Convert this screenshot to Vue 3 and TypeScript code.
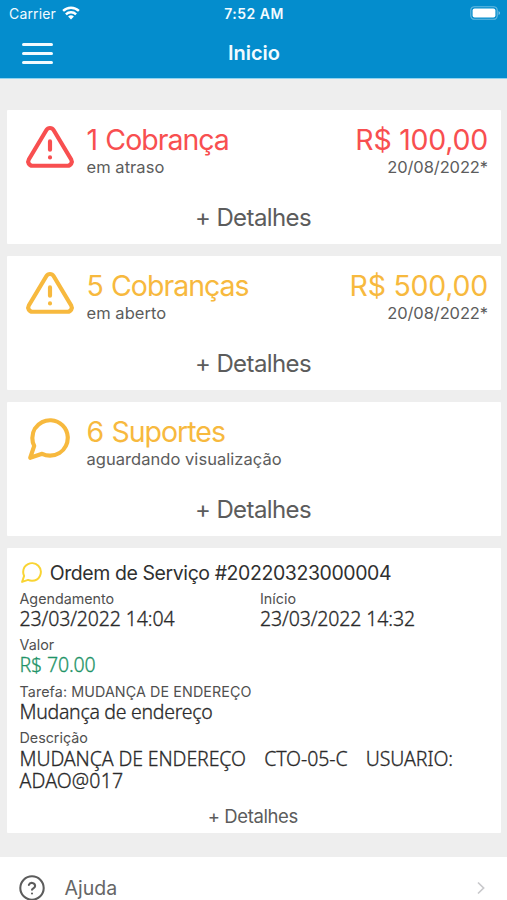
<script setup lang="ts">
interface Summary {
  id: string
  icon: 'alert' | 'chat'
  tone: 'danger' | 'warning'
  title: string
  note: string
  amount?: string
  date?: string
}

const summaries: Summary[] = [
  { id: 'overdue', icon: 'alert', tone: 'danger', title: '1 Cobrança', note: 'em atraso', amount: 'R$ 100,00', date: '20/08/2022*' },
  { id: 'open', icon: 'alert', tone: 'warning', title: '5 Cobranças', note: 'em aberto', amount: 'R$ 500,00', date: '20/08/2022*' },
  { id: 'support', icon: 'chat', tone: 'warning', title: '6 Suportes', note: 'aguardando visualização' },
]
</script>

<template>
  <div class="screen">
    <header class="header">
      <div class="status">
        <div class="carrier">
          <span>Carrier</span>
          <svg class="wifi" viewBox="0 0 18 14" fill="none" stroke="#fff" stroke-width="2.4">
            <path d="M1.1 4.9a11.4 11.4 0 0 1 15.8 0" />
            <path d="M3.9 8.3a7.3 7.3 0 0 1 10.2 0" />
            <path d="M9 13.6L6.1 10.6a4.2 4.2 0 0 1 5.8 0z" fill="#fff" stroke="none" />
          </svg>
        </div>
        <span class="time">7:52 AM</span>
        <svg class="battery" viewBox="0 0 31 14">
          <rect x=".8" y=".7" width="26.4" height="12.6" rx="3.6" fill="none" stroke="#fff" stroke-opacity=".4" stroke-width="1.1" />
          <rect x="2.6" y="2.5" width="22.8" height="9" rx="2" fill="#fff" />
          <path d="M28.6 4.9v4.2c1.9-.8 1.9-3.4 0-4.2z" fill="#fff" fill-opacity=".5" />
        </svg>
      </div>
      <div class="nav">
        <button class="burger" aria-label="Menu"><i></i><i></i><i></i></button>
        <h1>Inicio</h1>
      </div>
    </header>

    <main class="cards">
      <section v-for="s in summaries" :key="s.id" class="card summary" :class="s.tone">
        <div class="top">
          <svg class="icon" :class="s.icon" viewBox="0 0 24 24" fill="none" stroke="currentColor" stroke-width="2" stroke-linecap="round" stroke-linejoin="round">
            <template v-if="s.icon === 'alert'">
              <path d="M10.29 3.86L1.82 18a2 2 0 0 0 1.71 3h16.94a2 2 0 0 0 1.71-3L13.71 3.86a2 2 0 0 0-3.42 0z" />
              <path d="M12 9.3v4M12 17h.01" />
            </template>
            <path v-else d="M21 11.5a8.38 8.38 0 0 1-.9 3.8 8.5 8.5 0 0 1-7.6 4.7 8.38 8.38 0 0 1-3.8-.9L3 21l1.9-5.7a8.38 8.38 0 0 1-.9-3.8 8.5 8.5 0 0 1 4.7-7.6 8.38 8.38 0 0 1 3.8-.9h.5a8.48 8.48 0 0 1 8 8v.5z" />
          </svg>
          <div class="info">
            <div class="big">{{ s.title }}</div>
            <div class="small">{{ s.note }}</div>
          </div>
          <div v-if="s.amount" class="info right">
            <div class="big amount">{{ s.amount }}</div>
            <div class="small date">{{ s.date }}</div>
          </div>
        </div>
        <div class="more">+ Detalhes</div>
      </section>

      <section class="card order">
        <div class="order-title">
          <svg viewBox="0 0 24 24" fill="none" stroke="#f9d433" stroke-width="1.9" stroke-linecap="round" stroke-linejoin="round">
            <path d="M21 11.5a8.38 8.38 0 0 1-.9 3.8 8.5 8.5 0 0 1-7.6 4.7 8.38 8.38 0 0 1-3.8-.9L3 21l1.9-5.7a8.38 8.38 0 0 1-.9-3.8 8.5 8.5 0 0 1 4.7-7.6 8.38 8.38 0 0 1 3.8-.9h.5a8.48 8.48 0 0 1 8 8v.5z" />
          </svg>
          <span>Ordem de Serviço #20220323000004</span>
        </div>
        <div class="pair">
          <div class="field">
            <div class="label">Agendamento</div>
            <div class="value num">23/03/2022 14:04</div>
          </div>
          <div class="field">
            <div class="label">Início</div>
            <div class="value num">23/03/2022 14:32</div>
          </div>
        </div>
        <div class="field">
          <div class="label">Valor</div>
          <div class="value num money">R$ 70.00</div>
        </div>
        <div class="field">
          <div class="label task">Tarefa: MUDANÇA DE ENDEREÇO</div>
          <div class="value text">Mudança de endereço</div>
        </div>
        <div class="field">
          <div class="label">Descrição</div>
          <div class="value caps">
            <div class="words"><span>MUDANÇA DE ENDEREÇO</span><span>CTO-05-C</span><span>USUARIO:</span></div>
            <div class="user">ADAO@017</div>
          </div>
        </div>
        <div class="more-small">+ Detalhes</div>
      </section>
    </main>

    <footer class="help">
      <svg class="q" viewBox="0 0 24 24" fill="none" stroke="#5c5c5c" stroke-width="1.9" stroke-linecap="round" stroke-linejoin="round">
        <circle cx="12" cy="12" r="10.8" />
        <path d="M9.1 9.2a3 3 0 0 1 5.8 1c0 2-2.9 2.6-2.9 3.4M12 17h.01" />
      </svg>
      <span>Ajuda</span>
      <svg class="chev" viewBox="0 0 8 14" fill="none" stroke="#c9c9cc" stroke-width="1.7"><path d="M1 1.5L6.6 7 1 12.5" /></svg>
    </footer>
  </div>
</template>

<style>
body { background: #eee; overflow: hidden; }
</style>

<style scoped>
.screen {
  width: 507px;
  height: 900px;
  overflow: hidden;
  background: #eee;
  font-family: Inter, "Liberation Sans", sans-serif;
  color: #5c5c5c;
  white-space: nowrap;
}
.header { height: 79px; background: #048dcd; color: #f2fbff; border-bottom: 1px solid #8fd3f0; box-sizing: border-box; }
.status { display: grid; grid-template-columns: 1fr auto 1fr; align-items: center; height: 27px; padding: 0 6px 0 9px; font-size: 14px; }
.carrier { display: flex; align-items: center; gap: 6px; letter-spacing: .15px; }
.wifi { width: 18px; height: 14px; margin-top: -1px; }
.time { font-weight: 600; font-size: 14px; letter-spacing: .5px; margin-left: -2px; }
.battery { width: 31px; height: 14px; justify-self: end; margin-top: -1px; }
.nav { display: grid; grid-template-columns: 1fr auto 1fr; align-items: center; height: 51px; padding: 0 21px 0 22px; }
.burger { display: flex; flex-direction: column; gap: 6.3px; width: 31px; padding: 0; border: 0; background: none; margin-top: 2px; }
.burger i { height: 3px; border-radius: 2px; background: #f2fbff; }
.nav h1 { margin: 0; font-size: 20px; font-weight: 600; letter-spacing: -.05px; }

.cards { display: flex; flex-direction: column; gap: 12.1px; padding: 30.7px 6px 24px 7px; }
.card { background: #fff; border-radius: 1px; }
.summary { height: 134px; box-sizing: border-box; padding: 12px 0 0; }
.top { display: flex; height: 70px; padding: 0 13px 0 18px; }
.icon { width: 50px; height: 50px; margin: 0 12px 0 -.5px; color: var(--tone); }
.icon.chat { margin: 0 12.5px 0 -1px; }
.danger { --tone: #f84f50; }
.warning { --tone: #f7b93e; }
.info { flex: 1; }
.right { text-align: right; }
.big { height: 36px; line-height: 36px; font-size: 28.5px; color: var(--tone); letter-spacing: -1px; word-spacing: 1.2px; }
.amount { letter-spacing: -.25px; word-spacing: 0; }
.small { height: 19px; line-height: 19px; font-size: 16.5px; letter-spacing: .04px; }
.date { letter-spacing: -.1px; }
.more { text-align: center; font-size: 24px; line-height: 51px; letter-spacing: -.6px; padding-right: 2px; }

.order { height: 285px; box-sizing: border-box; padding: 12.4px 13px 0 12.5px; color: #303030; }
.order-title { display: flex; align-items: center; height: 25px; gap: 6px; font-size: 19.5px; letter-spacing: -.42px; margin-bottom: 3.6px; }
.order-title svg { width: 25px; height: 25px; margin-left: -.8px; }
.pair { display: grid; grid-template-columns: 240.5px 1fr; }
.field { padding-bottom: 6.3px; }
.label { height: 20px; line-height: 20px; font-size: 14.3px; color: #505050; }
.task { letter-spacing: .1px; }
.value {
  line-height: 20px;
  font-family: "Noto Sans", sans-serif;
  font-weight: 300;
  font-size: 19.5px;
  color: #2a2a2a;
  -webkit-text-stroke: .3px currentColor;
}
.num { letter-spacing: -.13px; }
.value.money { color: #1f9468; letter-spacing: -.15px; }
.text { letter-spacing: -.29px; }
.value.caps { line-height: 22px; letter-spacing: -.1px; }
.user { letter-spacing: .15px; }
.words { display: flex; gap: 18.3px; }
.more-small { text-align: center; font-size: 18.5px; line-height: 36px; letter-spacing: -.4px; color: #5c5c5c; padding-right: 2px; }

.help { display: flex; align-items: center; height: 62px; padding: 0 22px 0 18.5px; background: #fff; font-size: 19.5px; color: #666; }
.q { width: 26px; height: 26px; margin-right: 20px; }
.chev { width: 8px; height: 14px; margin-left: auto; }
</style>
